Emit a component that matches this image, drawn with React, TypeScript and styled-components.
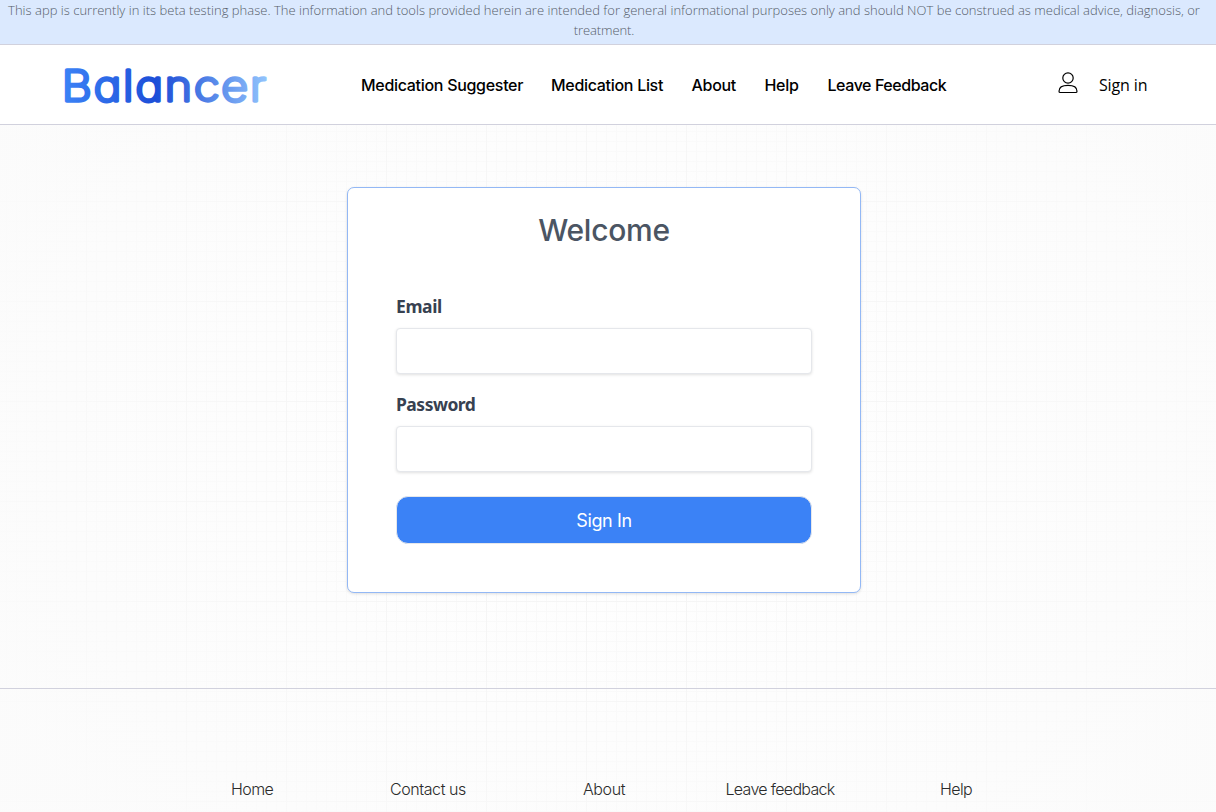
import React from "react";
import styled, { createGlobalStyle } from "styled-components";

const GlobalStyle = createGlobalStyle`
  *, *::before, *::after { box-sizing: border-box; }
  body { margin: 0; height: 812px; overflow: hidden; background: #fafafa; font-family: Inter, "Liberation Sans", sans-serif; }
`;

const Page = styled.div`
  position: relative;
  display: flex;
  flex-direction: column;
  height: 812px;
  overflow: hidden;
  isolation: isolate;
`;

const GridBackdrop = styled.div`
  position: absolute;
  inset: 0;
  z-index: -1;
  background-color: #fefefe;
  background-image:
    radial-gradient(ellipse 760px 640px at 50% 54%, rgba(251, 251, 251, 0) 20%, rgba(251, 251, 251, 0.9) 90%),
    linear-gradient(to right, #f4f4f4 1px, transparent 1px),
    linear-gradient(to bottom, #f4f4f4 1px, transparent 1px),
    linear-gradient(to right, #f9f9f9 1px, transparent 1px),
    linear-gradient(to bottom, #f9f9f9 1px, transparent 1px);
  background-size: auto, 100px 100px, 100px 100px, 10px 10px, 10px 10px;
  background-position: 0 0, 86px 0, 0 1px, 6px 0, 0 1px;
`;

const Banner = styled.div`
  height: 45px;
  flex: none;
  padding-right: 8px;
  border-bottom: 1px solid #d1d1dd;
  background: #dbe9fe;
  color: #565d69;
  font: 300 13px/20px "Open Sans", "Noto Sans", sans-serif;
  text-align: center;
  white-space: nowrap;
`;

const BannerLine = styled.div<{ $spacing?: string }>`
  letter-spacing: ${(p) => p.$spacing ?? "0"};
`;

const Header = styled.header`
  display: flex;
  align-items: center;
  height: 80px;
  flex: none;
  padding-left: 60px;
  border-bottom: 1px solid #d1d1dd;
  background: #fff;
`;

const Logo = styled.svg`
  width: 216px;
  height: 60px;
  flex: none;
`;

const Nav = styled.nav`
  display: flex;
  margin-left: 85px;
  padding-top: 1px;
`;

const NavLink = styled.a<{ $width: number; $spacing?: string }>`
  width: ${(p) => p.$width}px;
  color: #000;
  font-size: 16px;
  font-weight: 500;
  line-height: 24px;
  letter-spacing: ${(p) => p.$spacing ?? "0"};
  white-space: nowrap;
`;

const Account = styled.a`
  display: flex;
  align-items: center;
  gap: 20.5px;
  margin-left: auto;
  padding-right: 68.5px;
  color: #000;
  font: 400 16px/24px "Open Sans", "Noto Sans", sans-serif;
  letter-spacing: -0.1px;
`;

const UserIcon = styled.svg`
  width: 20px;
  height: 22px;
  margin-top: -3px;
`;

const Main = styled.main`
  display: flex;
  justify-content: center;
  align-items: flex-start;
  height: 563px;
  flex: none;
  padding: 62px 8px 0 0;
`;

const Card = styled.form`
  display: flex;
  flex-direction: column;
  width: 514px;
  height: 406px;
  padding: 22px 48px 0;
  border: 1px solid #93b8f5;
  border-radius: 7px;
  background: #fff;
  box-shadow: 0 1px 3px rgba(0, 0, 0, 0.12);
`;

const Title = styled.h2`
  margin: 0 0 44px;
  color: #4b5563;
  font-size: 30px;
  font-weight: 500;
  line-height: 40px;
  letter-spacing: -0.25px;
  text-align: center;
`;

const Label = styled.label`
  display: block;
  margin-bottom: 10px;
  color: #374151;
  font: 700 17.5px/24px "Noto Sans", "Open Sans", sans-serif;
`;

const LabelText = styled.span<{ $spacing: string }>`
  letter-spacing: ${(p) => p.$spacing};
`;

const Input = styled.input`
  display: block;
  width: 416px;
  height: 46px;
  margin: 0 0 18px;
  padding: 8px 12px;
  border: 1px solid #e5e7eb;
  border-radius: 4px;
  background: #fff;
  box-shadow: 0 1px 3px rgba(0, 0, 0, 0.12);
`;

const SubmitButton = styled.button`
  height: 48px;
  margin-top: 6px;
  padding: 2px 0 0;
  border: 1px solid #e5e7eb;
  border-radius: 12px;
  background: #3b82f6;
  color: #fff;
  font: 400 18px/28px Inter, sans-serif;
  letter-spacing: -0.4px;
`;

const Footer = styled.footer`
  display: flex;
  flex: none;
  height: 124px;
  padding: 88px 0 0 231px;
  border-top: 1px solid #d1d1dd;
`;

const FooterLink = styled.a<{ $width: number; $spacing?: string }>`
  width: ${(p) => p.$width}px;
  color: #2b2b2b;
  font-size: 16px;
  font-weight: 300;
  line-height: 24px;
  letter-spacing: ${(p) => p.$spacing ?? "0"};
  white-space: nowrap;
`;

const navItems = [
  { label: "Medication Suggester", width: 190, spacing: "-0.3px" },
  { label: "Medication List", width: 140.5, spacing: "-0.3px" },
  { label: "About", width: 73, spacing: "-0.3px" },
  { label: "Help", width: 63, spacing: "-0.3px" },
  { label: "Leave Feedback", width: 120, spacing: "-0.43px" },
];

const footerItems = [
  { label: "Home", width: 159, spacing: "-0.6px" },
  { label: "Contact us", width: 193, spacing: "-0.42px" },
  { label: "About", width: 142.5, spacing: "-0.4px" },
  { label: "Leave feedback", width: 214.5, spacing: "-0.68px" },
  { label: "Help", width: 60, spacing: "-0.6px" },
];

export default function App() {
  return (
    <>
      <GlobalStyle />
      <Page>
        <GridBackdrop />
        <Banner>
          <BannerLine $spacing="0.013px">
            This app is currently in its beta testing phase. The information and tools provided herein are intended for
            general informational purposes only and should NOT be construed as medical advice, diagnosis, or
          </BannerLine>
          <BannerLine $spacing="-0.1px">treatment.</BannerLine>
        </Banner>
        <Header>
          <Logo viewBox="0 0 216 60" aria-label="Balancer">
            <defs>
              <linearGradient id="brand" gradientUnits="userSpaceOnUse" x1="4" y1="0" x2="208" y2="0">
                <stop offset="0" stopColor="#3b82f6" />
                <stop offset="0.45" stopColor="#1d4ed8" />
                <stop offset="0.55" stopColor="#2f5fdc" />
                <stop offset="1" stopColor="#93c5fd" />
              </linearGradient>
            </defs>
            <text
              x="1.8"
              y="46.4"
              textLength="206"
              lengthAdjust="spacingAndGlyphs"
              fontFamily="Inter, sans-serif"
              fontSize="42"
              fontWeight="200"
              letterSpacing="1.7"
              fill="url(#brand)"
              stroke="url(#brand)"
              strokeWidth="3.3"
              strokeLinejoin="round"
              style={{ fontFeatureSettings: '"cv11"' }}
            >
              Balancer
            </text>
          </Logo>
          <Nav>
            {navItems.map((n) => (
              <NavLink key={n.label} $width={n.width} $spacing={n.spacing}>
                {n.label}
              </NavLink>
            ))}
          </Nav>
          <Account>
            <UserIcon viewBox="0 0 20 22" fill="none" stroke="#000" strokeWidth="1.2">
              <circle cx="10" cy="6" r="5.2" />
              <path d="M1 19.2C1 15.6 4 13.4 10 13.4s9 2.200 9 5.800q0 1.300-1.200 1.300H2.200Q1 20.500 1 19.200Z" />
            </UserIcon>
            Sign in
          </Account>
        </Header>
        <Main>
          <Card>
            <Title>Welcome</Title>
            <Label htmlFor="email">
              <LabelText $spacing="-0.4px">Email</LabelText>
            </Label>
            <Input id="email" />
            <Label htmlFor="password">
              <LabelText $spacing="-0.5px">Password</LabelText>
            </Label>
            <Input id="password" type="password" />
            <SubmitButton type="button">Sign In</SubmitButton>
          </Card>
        </Main>
        <Footer>
          {footerItems.map((f) => (
            <FooterLink key={f.label} $width={f.width} $spacing={f.spacing}>
              {f.label}
            </FooterLink>
          ))}
        </Footer>
      </Page>
    </>
  );
}
